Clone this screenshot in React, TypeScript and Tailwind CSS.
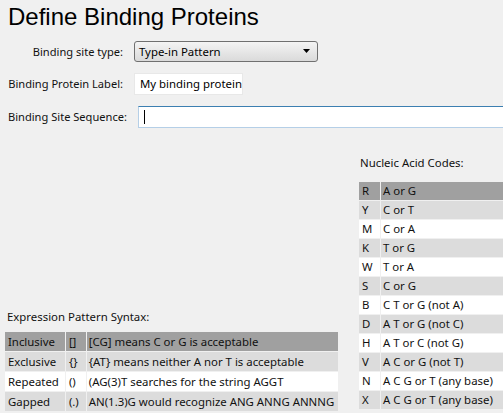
import React from 'react';

const codes: [string, string][] = [
  ['R', 'A or G'],
  ['Y', 'C or T'],
  ['M', 'C or A'],
  ['K', 'T or G'],
  ['W', 'T or A'],
  ['S', 'C or G'],
  ['B', 'C T or G (not A)'],
  ['D', 'A T or G (not C)'],
  ['H', 'A T or C (not G)'],
  ['V', 'A C or G (not T)'],
  ['N', 'A C G or T (any base)'],
  ['X', 'A C G or T (any base)'],
];

const syntax: [string, string, string][] = [
  ['Inclusive', '[]', '[CG] means C or G is acceptable'],
  ['Exclusive', '{}', '{AT} means neither A nor T is acceptable'],
  ['Repeated', '()', '(AG(3)T searches for the string AGGT'],
  ['Gapped', '(.)', 'AN(1.3)G would recognize ANG ANNG ANNNG'],
];

// header row dark, then light gray / white alternating
const rowBg = (i: number) =>
  i === 0 ? 'bg-[#a0a0a0]' : i % 2 === 1 ? 'bg-[#dcdcdc]' : 'bg-white';

export default function App() {
  return (
    <div className="w-[503px] h-[413px] overflow-hidden bg-[#f0f0f0] text-[#111] font-['Noto_Sans',sans-serif] text-[11.4px]">
      <h1 className="pl-2 pt-[3px] text-[24px] leading-[28px] text-black font-['Liberation_Sans',Arial,sans-serif]">
        Define Binding Proteins
      </h1>

      <div className="mt-[10px] flex flex-col gap-[11px] text-[11.1px]">
        <div className="flex items-center h-[21px]">
          <label className="w-[123px] text-right leading-4 whitespace-nowrap">Binding site type:</label>
          <div className="ml-[11px] w-[184px] h-[21px] flex items-center justify-between rounded-[3px] border border-[#707070] bg-gradient-to-b from-[#f4f4f4] to-[#dadada] pl-[4px] pr-[4px] text-[11.4px]">
            <span className="leading-4 text-black">Type-in Pattern</span>
            <svg width="8" height="5" viewBox="0 0 8 5" className="mr-[2px]">
              <path d="M0 0 H7 L3.5 4 Z" fill="#000" />
            </svg>
          </div>
        </div>

        <div className="flex items-center h-[22px]">
          <label className="w-[123px] text-right leading-4 whitespace-nowrap">Binding Protein Label:</label>
          <div className="ml-[11px] w-[109px] h-[22px] flex items-center overflow-hidden whitespace-nowrap bg-white border border-[#e8e8e8] pl-[5px] text-black leading-4 text-[11.4px]">
            My binding protein
          </div>
        </div>

        <div className="flex items-center h-[22px]">
          <label className="w-[138px] shrink-0 pl-2 leading-4 whitespace-nowrap">Binding Site Sequence:</label>
          <div className="w-[380px] shrink-0 h-[22px] flex items-center bg-white border border-[#b5cfe7] border-t-[#3c7fb1] pl-[5px]">
            <span className="block w-px h-[14px] bg-black" />
          </div>
        </div>
      </div>

      <div className="flex">
        <div className="mt-[181px] pl-[4px] w-[358px] shrink-0">
          <div className="pl-[3px] leading-4">Expression Pattern Syntax:</div>
          <table className="mt-[6px] border-separate border-spacing-[1px]">
            <tbody>
              {syntax.map(([name, sym, desc], i) => (
                <tr key={name} className={rowBg(i)}>
                  <td className="h-[19px] pl-[3px] pr-[6px] leading-4 p-0 whitespace-nowrap">{name}</td>
                  <td className="h-[19px] pl-[3px] pr-[7px] leading-4 p-0 whitespace-nowrap">{sym}</td>
                  <td className="h-[19px] pl-[2px] pr-[4px] leading-4 p-0 whitespace-nowrap">{desc}</td>
                </tr>
              ))}
            </tbody>
          </table>
        </div>

        <div className="mt-[27px] shrink-0">
          <div className="pl-[2px] leading-4">Nucleic Acid Codes:</div>
          <table className="mt-[10px] w-[160px] border-separate border-spacing-[1px]">
            <tbody>
              {codes.map(([code, desc], i) => (
                <tr key={code} className={rowBg(i)}>
                  <td className="h-[18px] w-[21px] pl-[3px] leading-4 p-0">{code}</td>
                  <td className="h-[18px] pl-[2px] leading-4 p-0 whitespace-nowrap">{desc}</td>
                </tr>
              ))}
            </tbody>
          </table>
        </div>
      </div>
    </div>
  );
}
